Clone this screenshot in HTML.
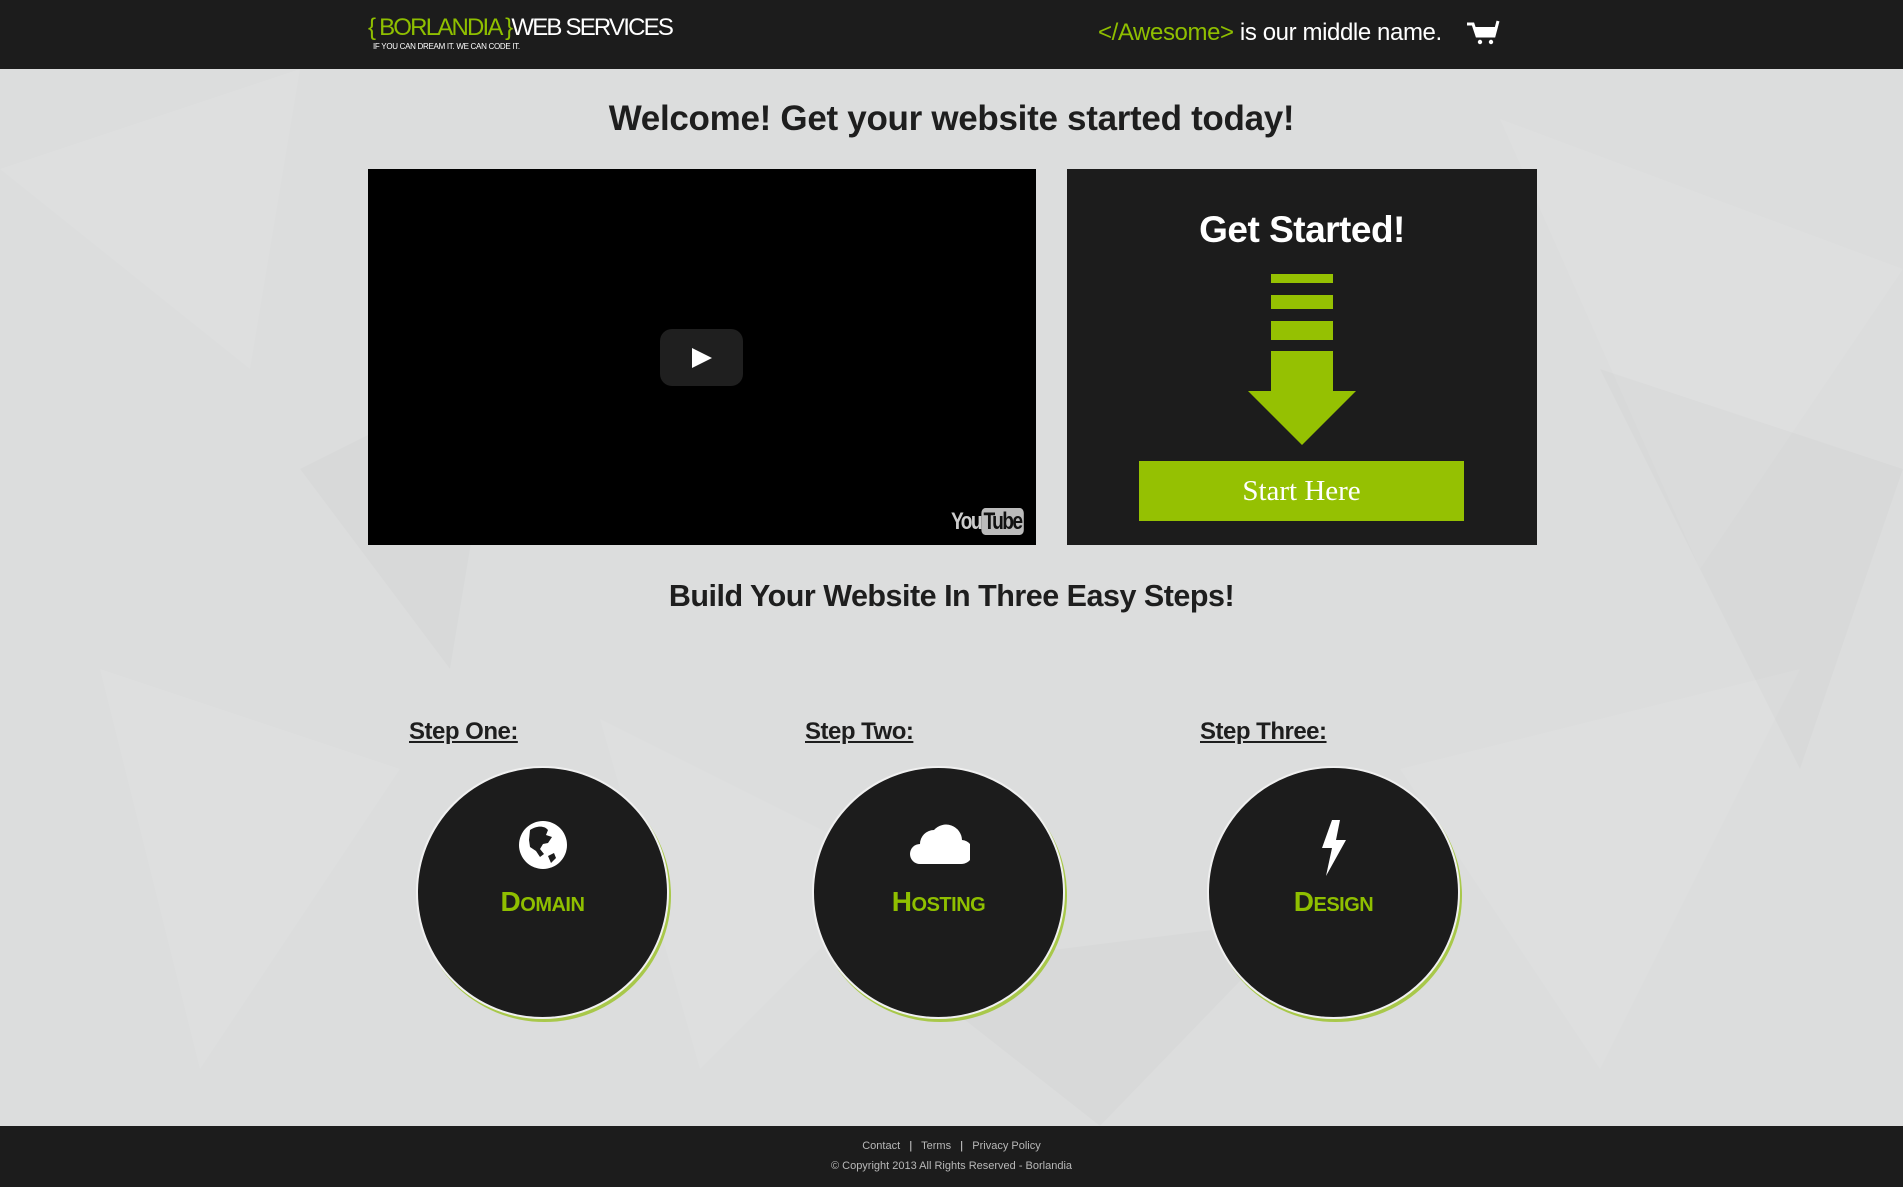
<!DOCTYPE html>
<html><head><meta charset="utf-8"><style>
*{margin:0;padding:0;box-sizing:border-box}
body{width:1903px;height:1187px;position:relative;overflow:hidden;font-family:"Liberation Sans",sans-serif;background:#dcdddd}
.a{position:absolute}
#hd{left:0;top:0;width:1903px;height:69px;background:#1c1c1c}
#ft{left:0;top:1126px;width:1903px;height:61px;background:#1c1c1c;color:#b8b8b8;font-size:11px;text-align:center}
.g{color:#8fbf00}
h1,h2{position:absolute;left:0;width:1903px;text-align:center;color:#1e1e1e;font-weight:bold}
.step{position:absolute;top:718px;font-size:24px;color:#1e1e1e;text-decoration:underline;font-weight:bold;letter-spacing:-0.5px}
.c{position:absolute;top:766px;width:253px;height:253px;border-radius:50%;background:#1c1c1c;border:2px solid #f0f0f0;box-shadow:2px 3px 0 #a8c84a}
.c .l{position:absolute;top:118px;width:100%;text-align:center;color:#8fbf00;font-weight:bold;font-size:28px;font-variant:small-caps;letter-spacing:-0.5px}
.c svg{position:absolute;left:50%;top:52px;transform:translateX(-50%)}
</style></head><body>
<svg class="a" style="left:0;top:69px" width="1903" height="1057"><g fill="#fff" opacity="0.08">
<polygon points="0,100 300,0 250,300"/><polygon points="1500,50 1903,200 1700,500"/><polygon points="100,600 400,700 200,1000"/><polygon points="1400,700 1800,600 1600,1000"/><polygon points="600,650 900,800 700,1000"/></g>
<g fill="#000" opacity="0.015"><polygon points="300,400 500,300 450,600"/><polygon points="1600,300 1903,400 1800,700"/><polygon points="900,900 1300,850 1100,1057"/></g></svg>
<div id="hd" class="a">
<div class="a" style="left:368px;top:14px;font-size:24px;color:#fff;letter-spacing:-1.8px;white-space:nowrap"><span class="g">{ BORLANDIA }</span>WEB SERVICES</div>
<div class="a" style="left:373px;top:42px;font-size:8px;color:#fff;letter-spacing:-0.3px">IF YOU CAN DREAM IT. WE CAN CODE IT.</div>
<div class="a" style="left:1098px;top:19px;font-size:24px;color:#fff;letter-spacing:-0.4px;white-space:nowrap"><span class="g">&lt;/Awesome&gt;</span> is our middle name.</div>
<svg class="a" style="left:1466px;top:20px" width="34" height="26"><path d="M1 4h6l4 12h17l4-15" stroke="#fff" stroke-width="3" fill="none"/><path d="M8 7h22l-3 8H11z" fill="#fff"/><circle cx="14" cy="22" r="2.2" fill="#fff"/><circle cx="25" cy="22" r="2.2" fill="#fff"/></svg>
</div>
<h1 style="top:99px;font-size:35px;letter-spacing:-0.3px">Welcome! Get your website started today!</h1>
<div class="a" style="left:368px;top:169px;width:668px;height:376px;background:#000">
<div class="a" style="left:292px;top:160px;width:83px;height:57px;border-radius:12px;background:#1f1f1f"></div>
<svg class="a" style="left:322px;top:177px" width="24" height="24"><polygon points="2,2 22,12 2,22" fill="#fff"/></svg>
<div class="a" style="left:583px;top:339px;font-size:24px;color:#ccc;font-weight:bold;letter-spacing:-2px;transform:scaleX(0.8);transform-origin:left">You<span style="background:#bbb;color:#111;border-radius:5px;padding:0 3px">Tube</span></div>
</div>
<div class="a" style="left:1067px;top:169px;width:470px;height:376px;background:#1c1c1c">
<div class="a" style="left:0;top:40px;width:470px;text-align:center;color:#fff;font-weight:bold;font-size:37px;letter-spacing:-0.5px">Get Started!</div>
<svg class="a" style="left:0;top:0" width="470" height="376"><g fill="#95c102">
<rect x="204" y="105" width="62" height="9"/><rect x="204" y="126" width="62" height="14"/><rect x="204" y="152" width="62" height="19"/><rect x="204" y="182" width="62" height="42"/><polygon points="181,222 289,222 235,276"/></g></svg>
<div class="a" style="left:72px;top:292px;width:325px;height:60px;background:#95c102;color:#fff;font-family:'Liberation Serif',serif;font-size:29px;text-align:center;line-height:60px">Start Here</div>
</div>
<h2 style="top:579px;font-size:30.5px;letter-spacing:-0.5px">Build Your Website In Three Easy Steps!</h2>
<div class="step" style="left:409px">Step One:</div>
<div class="step" style="left:805px">Step Two:</div>
<div class="step" style="left:1200px">Step Three:</div>
<div class="c" style="left:416px"><svg width="50" height="50" viewBox="0 0 50 50"><circle cx="25" cy="25" r="24" fill="#fff"/><path d="M12 10c6-4 14-5 18 0l-2 5 6 2-4 6-5 1-3 5 4 5-4 3-4-6-6-4-1-7z" fill="#1c1c1c"/><path d="M30 36l6-3 2 5-5 5z" fill="#1c1c1c"/></svg><div class="l">Domain</div></div>
<div class="c" style="left:812px"><svg width="62" height="46" viewBox="0 0 62 46"><path d="M12 44a10 10 0 0 1 0-20 14 14 0 0 1 14-14 16 16 0 0 1 28 10 10 10 0 0 1-2 24z" fill="#fff"/></svg><div class="l">Hosting</div></div>
<div class="c" style="left:1207px"><svg width="32" height="56" viewBox="0 0 32 56"><path d="M14 0h8l-4 20h10L8 56l6-28H4z" fill="#fff"/></svg><div class="l">Design</div></div>
<div id="ft" class="a">
<div style="position:absolute;top:14px;width:100%">Contact &nbsp;&nbsp;<span style="color:#ddd">|</span>&nbsp;&nbsp; Terms &nbsp;&nbsp;<span style="color:#ddd">|</span>&nbsp;&nbsp; Privacy Policy</div>
<div style="position:absolute;top:34px;width:100%">© Copyright 2013 All Rights Reserved - Borlandia</div>
</div>
</body></html>
